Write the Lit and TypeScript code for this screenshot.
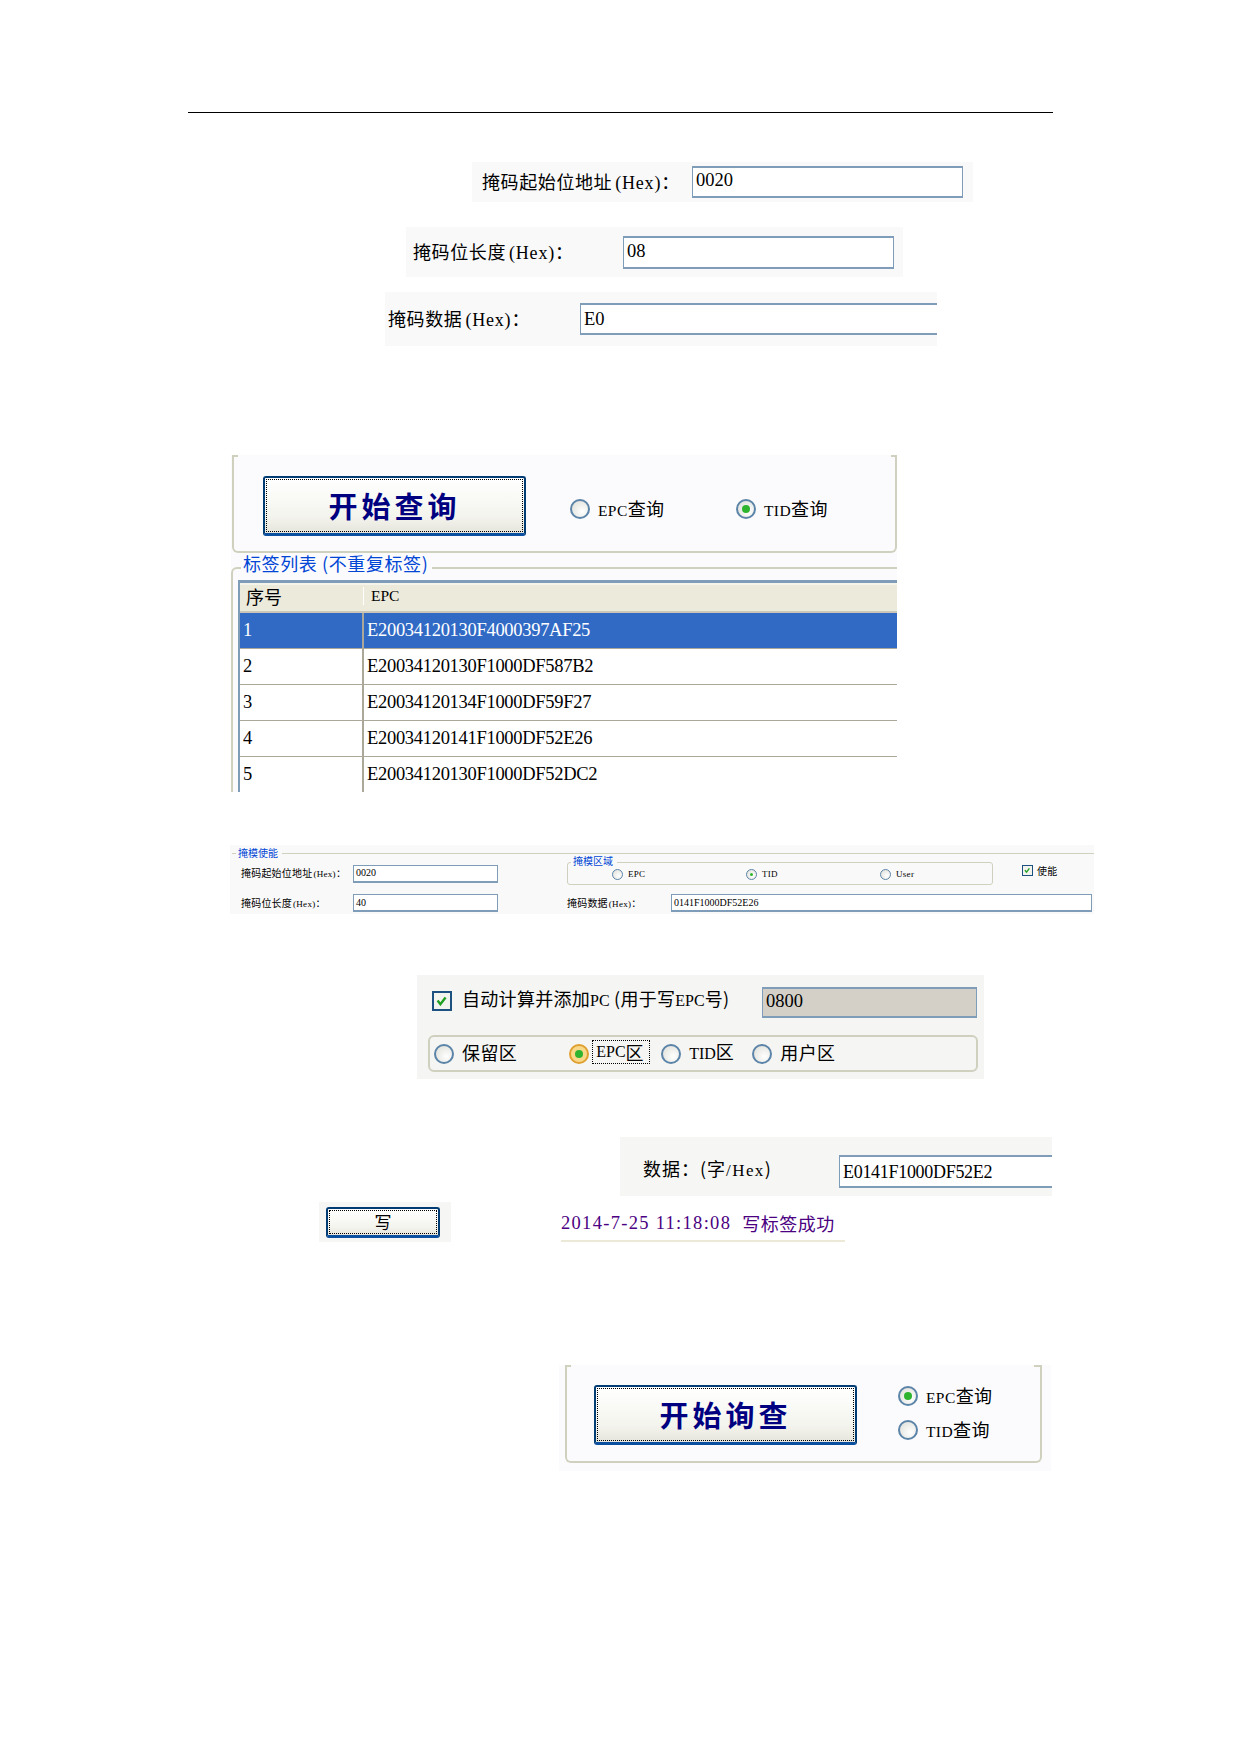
import { LitElement, html, css } from "lit";
import { customElement } from "lit/decorators.js";

const rows = [
  ["1", "E20034120130F4000397AF25"],
  ["2", "E20034120130F1000DF587B2"],
  ["3", "E20034120134F1000DF59F27"],
  ["4", "E20034120141F1000DF52E26"],
  ["5", "E20034120130F1000DF52DC2"],
];

@customElement("app-root")
export class AppRoot extends LitElement {
  static styles = css`
    :host {
      display: block;
      width: 1240px;
      height: 1754px;
      background: #fff;
      overflow: hidden;
      font-family: "Noto Sans CJK SC", sans-serif;
      font-size: 18px;
      line-height: 1;
      color: #000;
      padding-top: 112px;
      box-sizing: border-box;
    }
    .m { font-family: "Liberation Serif", serif; font-size: 18.5px; letter-spacing: 1.3px; }
    .s { font-family: "Liberation Serif", serif; font-size: 18px; letter-spacing: 0.8px; margin-left: 3px; }
    .l { font-family: "Liberation Serif", serif; font-size: 15.5px; }
    .rule { height: 1px; background: #000; width: 865px; margin-left: 188px; }
    .fig { display: flex; align-items: center; background: #f9f9f9; box-sizing: border-box; }
    .lab { flex: none; white-space: nowrap; }
    .input {
      flex: none;
      box-sizing: border-box;
      background: #fff;
      border: 1px solid #7f9db9;
      border-top-width: 2px;
      border-bottom-width: 2px;
      display: flex;
      align-items: center;
      padding-left: 3px;
      font-family: "Liberation Serif", serif;
      font-size: 18.5px;
      white-space: nowrap;
    }
    .f1 { margin: 49px 0 0 472px; width: 501px; height: 40px; padding-left: 10px; }
    .f1 .lab { width: 210px; letter-spacing: 0.6px; }
    .f1 .input { width: 271px; height: 32px; padding-bottom: 3px; }
    .f2 { margin: 25px 0 0 406px; width: 497px; height: 50px; padding-left: 7px; }
    .f2 .lab { width: 210px; letter-spacing: 0.6px; }
    .f2 .input { width: 271px; height: 33px; padding-bottom: 1px; }
    .f3 { margin: 15px 0 0 385px; width: 552px; height: 54px; padding-left: 3px; }
    .f3 .lab { width: 192px; letter-spacing: 0.6px; }
    .f3 .input { width: 357px; height: 32px; border-right: 0; }

    .f4 { margin: 109px 0 0 231px; width: 666px; height: 337px; background: #fbfbfd; }
    .panel {
      position: relative;
      box-sizing: border-box;
      height: 98px;
      margin-left: 1px;
      border: 2px solid #d0d0bf;
      border-top: 0;
      border-radius: 0 0 6px 6px;
      display: flex;
      align-items: center;
      padding: 5px 0 0 29px;
    }
    .panel::before,
    .panel::after {
      content: "";
      position: absolute;
      top: 0;
      width: 4px;
      height: 4px;
      border-top: 2px solid #d0d0bf;
      box-sizing: border-box;
    }
    .panel::before { left: 0; }
    .panel::after { right: 0; }
    .btn {
      flex: none;
      box-sizing: border-box;
      border: 2px solid #003c74;
      border-bottom: 3px solid #0a4fa0;
      border-radius: 3px;
      background: linear-gradient(#fff, #f4f4ee 70%, #e6e5dc);
      display: flex;
      align-items: center;
      justify-content: center;
      padding: 1px;
    }
    .dots {
      flex: 1;
      align-self: stretch;
      border: 1px dotted #000;
      display: flex;
      align-items: center;
      justify-content: center;
    }
    .big { width: 263px; height: 60px; color: #000080; font-size: 29px; letter-spacing: 4px; font-weight: 700; }
    .opt { flex: none; display: flex; align-items: center; gap: 8px; white-space: nowrap; letter-spacing: 0.4px; }
    .radio {
      flex: none;
      width: 20px;
      height: 20px;
      box-sizing: border-box;
      border: 2px solid #5b84a8;
      border-radius: 50%;
      background: radial-gradient(circle at 65% 65%, #fff, #dcdcd6);
      display: flex;
      align-items: center;
      justify-content: center;
    }
    .radio.on::after {
      content: "";
      width: 8px;
      height: 8px;
      border-radius: 50%;
      background: #2fb42f;
    }
    .radio.hot { border-color: #e0a030; background: #f8d98a; }
    .radio.sm { width: 11px; height: 11px; border-width: 1px; }
    .radio.sm.on::after { width: 3px; height: 3px; }
    .top-opts { display: flex; margin: 7px 0 0 44px; }
    .top-opts .opt { width: 166px; }
    .legend { position: absolute; background: #fbfbfd; color: #0046d5; white-space: nowrap; padding: 0 4px 0 2px; }
    .list {
      margin: 14px 0 0 0;
      height: 225px;
      border-top: 2px solid #d0d0bf;
      border-left: 2px solid #d0d0bf;
      border-top-left-radius: 6px;
      padding: 11px 0 0 5px;
      box-sizing: border-box;
      position: relative;
    }
    .list .legend { left: 8px; top: -15px; letter-spacing: 0.6px; }
    .table { box-sizing: border-box; border-top: 3px solid #7f9db9; border-left: 2px solid #7f9db9; height: 212px; overflow: hidden; background: #fff; }
    .thead { height: 30px; padding-bottom: 4px; display: flex; align-items: center; background: #ebeadb; border-top: 2px solid #f5f4ea; border-bottom: 2px solid #cbc7b8; box-sizing: border-box; }
    .thead .c1 { width: 124px; padding-left: 6px; box-sizing: border-box; border-right: 1px solid #fff; }
    .thead .c2 { padding-left: 7px; font-size: 15.5px; }
    .row { height: 36px; box-sizing: border-box; display: flex; border-bottom: 1px solid #aca899; font-family: "Liberation Serif", serif; font-size: 18.5px; letter-spacing: -0.3px; align-items: stretch; }
    .row.sel { background: #316ac5; color: #fff; }
    .row .c1 { width: 124px; box-sizing: border-box; padding-left: 3px; border-right: 2px solid #aca899; display: flex; align-items: center; }
    .row .c2 { padding-left: 3px; display: flex; align-items: center; }

    .f5 { display: block; margin: 53px 0 0 230px; width: 864px; height: 69px; padding-top: 8px; background: #f9f9f9; box-sizing: border-box; }
    .frame { position: relative; border-top: 1px solid #d0d0bf; margin-left: 2px; height: 60px; box-sizing: border-box; font-size: 10px; }
    .frame .legend { left: 4px; top: -6px; font-size: 10px; background: #f9f9f9; }
    .f5row { display: flex; align-items: center; padding-left: 9px; }
    .f5row .input { font-size: 10px; height: 18px; width: 145px; padding-left: 2px; border-width: 1px; border-bottom-width: 2px; }
    .f5row .lab { width: 112px; letter-spacing: 0.2px; }
    .tiny { font-family: "Liberation Serif", serif; font-size: 9px; letter-spacing: 0.3px; margin-left: 1px; }
    .fs {
      flex: none;
      position: relative;
      box-sizing: border-box;
      width: 426px;
      height: 23px;
      margin-left: 69px;
      border: 1px solid #d0d0bf;
      border-radius: 3px;
      display: flex;
      align-items: center;
      padding: 2px 0 0 44px;
    }
    .fs .legend { left: 3px; top: -7px; }
    .fs .opt { gap: 4px; width: 134px; }
    .chk {
      flex: none;
      box-sizing: border-box;
      width: 20px;
      height: 20px;
      border: 2px solid #1c5180;
      background: #f4f4ee;
      display: flex;
      align-items: center;
      justify-content: center;
    }
    .chk svg { display: block; width: 70%; height: 70%; }
    .chk.sm { width: 11px; height: 11px; border-width: 1px; margin: -6px 0 0 29px; }
    .use { margin: -6px 0 0 4px; }
    .r1 { padding-top: 8px; }
    .r2 { margin-top: 9px; }
    .r2 .l2 { margin-left: 69px; width: 104px; }
    .r2 .wide { width: 421px; }

    .f6 { display: block; margin: 61px 0 0 417px; width: 567px; height: 104px; background: #f5f5f3; padding: 12px 0 0 15px; box-sizing: border-box; }
    .f6top { display: flex; align-items: center; height: 31px; }
    .f6top .chk { margin-bottom: 4px; }
    .f6top .lab { width: 300px; margin-left: 10px; letter-spacing: 0.3px; padding-bottom: 7px; }
    .f6top .input { width: 215px; height: 31px; background: #d4d0c8; padding-bottom: 3px; }
    .f6 .s { font-size: 16px; letter-spacing: 0; margin: 0; }
    .f6grp {
      box-sizing: border-box;
      margin: 17px 0 0 -4px;
      width: 550px;
      height: 37px;
      border: 2px solid #d0d0bf;
      border-radius: 6px;
      display: flex;
      align-items: center;
      padding-left: 4px;
      white-space: nowrap;
    }
    .f6grp .opt { gap: 8px; }
    .f6grp .opt > span:last-child { margin-top: -3px; }
    .focus { width: 58px; border: 1px dotted #000; padding: 3px; margin-left: -5px; height: 24px; box-sizing: border-box; display: flex; align-items: center; }

    .f7 { margin: 58px 0 0 620px; width: 432px; height: 59px; background: #f6f6f4; padding-left: 23px; }
    .f7 .lab { width: 196px; letter-spacing: 1px; margin-top: 4px; }
    .f7 .input { width: 213px; height: 33px; margin-top: 10px; border-right: 0; font-size: 18px; letter-spacing: -0.3px; }
    .f7 .s { margin: 0; font-size: 17px; letter-spacing: 1.4px; }
    .f7b { display: flex; align-items: center; margin: 6px 0 0 319px; height: 40px; }
    .wbg { flex: none; width: 132px; height: 40px; background: #f6f6f4; display: flex; align-items: center; padding-left: 7px; box-sizing: border-box; }
    .wbtn { width: 114px; height: 31px; font-size: 17px; }
    .status { margin-left: 110px; width: 284px; height: 35px; margin-top: 4px; box-sizing: border-box; border-bottom: 2px solid #ece9d8; color: #4b0082; white-space: nowrap; display: flex; align-items: center; gap: 11px; letter-spacing: 0.5px; }

    .f8 { display: block; margin: 123px 0 0 559px; width: 492px; height: 106px; background: #fbfbfd; padding-left: 6px; box-sizing: border-box; }
    .f8p {
      position: relative;
      box-sizing: border-box;
      width: 477px;
      height: 98px;
      border: 2px solid #d0d0bf;
      border-top: 0;
      border-radius: 0 0 6px 6px;
      display: flex;
      align-items: center;
      padding: 3px 0 0 27px;
    }
    .f8p::before,
    .f8p::after {
      content: "";
      position: absolute;
      top: 0;
      width: 4px;
      height: 4px;
      border-top: 2px solid #d0d0bf;
      box-sizing: border-box;
    }
    .f8p::before { left: 0; }
    .f8p::after { right: -2px; width: 8px; }
    .f8opts { display: flex; flex-direction: column; gap: 14px; margin: -3px 0 0 41px; }
  `;

  render() {
    const check = html`<svg viewBox="0 0 14 14"><path d="M2 7l3.5 4.5L12 3" fill="none" stroke="#22a022" stroke-width="3"/></svg>`;
    return html`
      <div class="rule"></div>
      <div class="fig f1"><span class="lab">掩码起始位地址<span class="s">(Hex)</span>：</span><div class="input">0020</div></div>
      <div class="fig f2"><span class="lab">掩码位长度<span class="s">(Hex)</span>：</span><div class="input">08</div></div>
      <div class="fig f3"><span class="lab">掩码数据<span class="s">(Hex)</span>：</span><div class="input">E0</div></div>

      <div class="f4">
        <div class="panel">
          <div class="btn big"><div class="dots">开始查询</div></div>
          <div class="top-opts">
            <div class="opt"><span class="radio"></span><span><span class="l">EPC</span>查询</span></div>
            <div class="opt"><span class="radio on"></span><span><span class="l">TID</span>查询</span></div>
          </div>
        </div>
        <div class="list">
          <span class="legend">标签列表 (不重复标签)</span>
          <div class="table">
            <div class="thead"><span class="c1">序号</span><span class="c2 l">EPC</span></div>
            ${rows.map(
              (r, i) => html`<div class="row ${i === 0 ? "sel" : ""}"><span class="c1">${r[0]}</span><span class="c2">${r[1]}</span></div>`
            )}
          </div>
        </div>
      </div>

      <div class="f5">
        <div class="frame">
          <span class="legend">掩模使能</span>
          <div class="f5row r1">
            <span class="lab">掩码起始位地址<span class="tiny">(Hex)</span>：</span>
            <div class="input">0020</div>
            <div class="fs">
              <span class="legend">掩模区域</span>
              <div class="opt"><span class="radio sm"></span><span class="tiny">EPC</span></div>
              <div class="opt"><span class="radio sm on"></span><span class="tiny">TID</span></div>
              <div class="opt"><span class="radio sm"></span><span class="tiny">User</span></div>
            </div>
            <div class="chk sm">${check}</div>
            <span class="lab use">使能</span>
          </div>
          <div class="f5row r2">
            <span class="lab">掩码位长度<span class="tiny">(Hex)</span>：</span>
            <div class="input">40</div>
            <span class="lab l2">掩码数据<span class="tiny">(Hex)</span>：</span>
            <div class="input wide">0141F1000DF52E26</div>
          </div>
        </div>
      </div>

      <div class="f6">
        <div class="f6top">
          <div class="chk">${check}</div>
          <span class="lab">自动计算并添加<span class="s">PC</span> (用于写<span class="s">EPC</span>号)</span>
          <div class="input">0800</div>
        </div>
        <div class="f6grp">
          <div class="opt"><span class="radio"></span><span>保留区</span></div>
          <div class="opt" style="margin-left:52px"><span class="radio on hot"></span><span class="focus"><span class="s">EPC</span>区</span></div>
          <div class="opt" style="margin-left:11px"><span class="radio"></span><span><span class="s">TID</span>区</span></div>
          <div class="opt" style="margin-left:18px"><span class="radio"></span><span>用户区</span></div>
        </div>
      </div>

      <div class="fig f7"><span class="lab">数据：(字<span class="s">/Hex</span>)</span><div class="input">E0141F1000DF52E2</div></div>
      <div class="f7b">
        <div class="wbg"><div class="btn wbtn"><div class="dots">写</div></div></div>
        <div class="status"><span class="m">2014-7-25 11:18:08</span><span>写标签成功</span></div>
      </div>

      <div class="f8">
        <div class="f8p">
          <div class="btn big"><div class="dots">开始询查</div></div>
          <div class="f8opts">
            <div class="opt"><span class="radio on"></span><span><span class="l">EPC</span>查询</span></div>
            <div class="opt"><span class="radio"></span><span><span class="l">TID</span>查询</span></div>
          </div>
        </div>
      </div>
    `;
  }
}
